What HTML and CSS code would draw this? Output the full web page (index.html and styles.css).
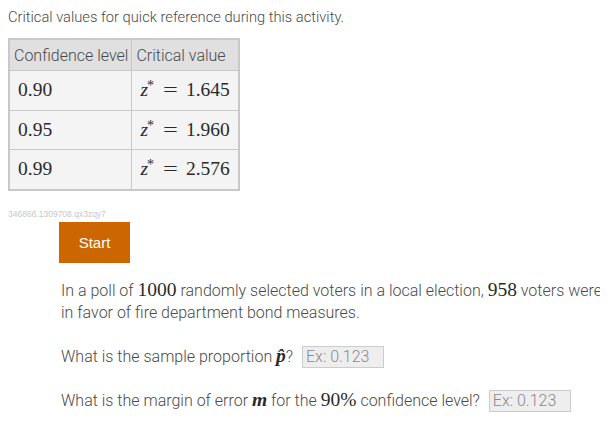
FILE: index.html
```html
<!DOCTYPE html>
<html>
<head>
<meta charset="utf-8">
<link rel="stylesheet" href="styles.css">
</head>
<body>
<p class="intro">Critical values for quick reference during this activity.</p>
<table class="ref">
  <thead>
    <tr><th>Confidence level</th><th>Critical value</th></tr>
  </thead>
  <tbody>
    <tr><td class="num">0.90</td><td class="num"><i>z</i><sup>*</sup><span class="eq">=</span>1.645</td></tr>
    <tr><td class="num">0.95</td><td class="num"><i>z</i><sup>*</sup><span class="eq">=</span>1.960</td></tr>
    <tr><td class="num">0.99</td><td class="num"><i>z</i><sup>*</sup><span class="eq">=</span>2.576</td></tr>
  </tbody>
</table>
<div class="id">346866.1309708.qx3zqy7</div>
<div class="activity">
  <button class="start">Start</button>
  <p class="prompt">In a poll of <span class="m">1000</span> randomly selected voters in a local election, <span class="m">958</span> voters were in favor of fire department bond measures.</p>
  <div class="q">What is the sample proportion <span class="m"><b><i>p̂</i></b></span>? <input class="ans" placeholder="Ex: 0.123"></div>
  <div class="q">What is the margin of error <span class="m"><b><i>m</i></b></span> for the <span class="m">90%</span> confidence level? <input class="ans" placeholder="Ex: 0.123"></div>
</div>
</body>
</html>
```
FILE: styles.css
```css
body {
  margin: 8px;
  font-family: Roboto, "Liberation Sans", sans-serif;
  font-weight: 300;
  color: #4a4a4a;
  background: #fff;
}
.intro {
  margin: 0 0 12px;
  font-size: 14.7px;
  line-height: 18px;
}
.ref {
  border-collapse: collapse;
  border: 2px solid #c8c8c8;
}
.ref th {
  background: #e0e0e0;
  font-weight: 300;
  font-size: 16px;
  text-align: left;
  padding: 0 3px 0 4px;
  height: 30px;
  border: 1px solid #c8c8c8;
  color: #4a4a4a;
}
.ref td {
  background: #f4f4f4;
  border: 1px solid #c8c8c8;
  height: 38.5px;
  padding: 0 8px;
}
.num {
  font-family: "Liberation Serif", "DejaVu Serif", serif;
  font-weight: 400;
  font-size: 19.5px;
  color: #2a2a2a;
  white-space: nowrap;
}
.num sup {
  font-size: 14px;
  vertical-align: 6px;
  line-height: 0;
  margin-left: -1px;
}
.num i { font-style: italic; }
.eq {
  display: inline-block;
  margin: 0 10px 0 11px;
  transform: scaleX(1.35);
}
.id {
  margin-top: 18px;
  font-family: "Liberation Sans", Arial, sans-serif;
  font-size: 8.5px;
  color: #c8c8c8;
  line-height: 10px;
}
.activity {
  margin-left: 51px;
  margin-right: -6px;
  margin-top: 3px;
}
.start {
  display: block;
  width: 71px;
  height: 41px;
  background: #cc6600;
  color: #fff;
  border: none;
  font-family: "Liberation Sans", Arial, sans-serif;
  font-size: 15px;
  padding: 0;
}
.prompt {
  margin: 17px 0 0 2px;
  font-size: 16px;
  line-height: 22px;
}
.m {
  font-family: "Liberation Serif", "DejaVu Serif", serif;
  font-size: 19.5px;
  line-height: 1;
  color: #2a2a2a;
  font-weight: 400;
}
.q {
  margin: 22px 0 0 2px;
  font-size: 16px;
  line-height: 22px;
}
.ans {
  width: 82px;
  height: 22px;
  box-sizing: border-box;
  background: #eeeeee;
  border: 1px solid #cccccc;
  font-family: Roboto, sans-serif;
  font-weight: 300;
  font-size: 16px;
  padding: 0 3px;
  margin-left: 5px;
  vertical-align: top;
}
.ans::placeholder { color: #8a8a8a; }
```
